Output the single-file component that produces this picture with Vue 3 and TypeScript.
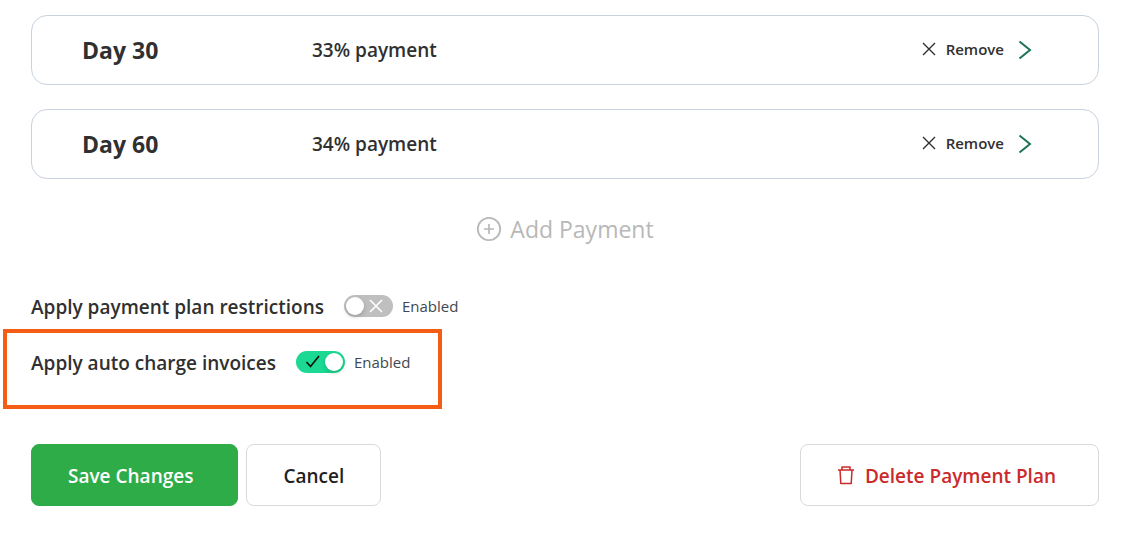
<script setup lang="ts">
import { ref } from 'vue'

interface Installment {
  day: number
  percent: number
}

interface Setting {
  id: string
  label: string
  on: boolean
  highlighted: boolean
}

const installments = ref<Installment[]>([
  { day: 30, percent: 33 },
  { day: 60, percent: 34 },
])

const settings = ref<Setting[]>([
  { id: 'restrictions', label: 'Apply payment plan restrictions', on: false, highlighted: false },
  { id: 'auto-charge', label: 'Apply auto charge invoices', on: true, highlighted: true },
])

function removeInstallment(index: number): void {
  installments.value.splice(index, 1)
}

function addInstallment(): void {
  const last = installments.value[installments.value.length - 1]
  installments.value.push({ day: (last?.day ?? 0) + 30, percent: 0 })
}
</script>

<template>
  <main class="plan">
    <ul class="installments">
      <li v-for="(item, index) in installments" :key="item.day" class="card">
        <strong class="day">Day {{ item.day }}</strong>
        <span class="percent">{{ item.percent }}% payment</span>
        <div class="card-actions">
          <button type="button" class="remove" @click="removeInstallment(index)">
            <svg width="14" height="14" viewBox="0 0 14 14" aria-hidden="true">
              <path d="M1 1 13 13M13 1 1 13" fill="none" stroke="currentColor" stroke-width="1.4" />
            </svg>
            Remove
          </button>
          <button type="button" class="open" :aria-label="`Open day ${item.day}`">
            <svg width="14" height="20" viewBox="0 0 14 20" aria-hidden="true">
              <path d="M1.5 1.5 12 10 1.5 18.5" fill="none" stroke="currentColor" stroke-width="2" />
            </svg>
          </button>
        </div>
      </li>
    </ul>

    <button type="button" class="add" @click="addInstallment">
      <svg width="26" height="26" viewBox="0 0 26 26" aria-hidden="true">
        <circle cx="13" cy="13" r="11.2" fill="none" stroke="currentColor" stroke-width="1.8" />
        <path d="M13 8v10M8 13h10" fill="none" stroke="currentColor" stroke-width="1.7" />
      </svg>
      Add Payment
    </button>

    <div class="settings">
      <div
        v-for="setting in settings"
        :key="setting.id"
        class="setting"
        :class="{ highlighted: setting.highlighted }"
      >
        <label class="setting-label" :for="setting.id">{{ setting.label }}</label>
        <span class="switch">
          <input :id="setting.id" v-model="setting.on" type="checkbox" role="switch" />
          <svg v-if="setting.on" class="mark mark-on" width="16" height="14" viewBox="0 0 16 14" aria-hidden="true">
            <path d="M1.5 7 5.5 11.5 14 1" fill="none" stroke="currentColor" stroke-width="1.7" />
          </svg>
          <svg v-else class="mark mark-off" width="14" height="14" viewBox="0 0 14 14" aria-hidden="true">
            <path d="M1 1 13 13M13 1 1 13" fill="none" stroke="currentColor" stroke-width="1.6" />
          </svg>
        </span>
        <span class="state">Enabled</span>
      </div>
    </div>

    <footer class="footer">
      <button type="button" class="btn save">Save Changes</button>
      <button type="button" class="btn cancel">Cancel</button>
      <button type="button" class="btn delete">
        <svg width="18" height="20" viewBox="0 0 18 20" aria-hidden="true">
          <path
            d="M1 4h16M5 4V1h8v3M3 4 3.8 17.5h10.4L15 4"
            fill="none"
            stroke="currentColor"
            stroke-width="1.5"
            stroke-linejoin="round"
          />
        </svg>
        Delete Payment Plan
      </button>
    </footer>
  </main>
</template>

<style>
body {
  margin: 0;
  background: #fff;
}
</style>

<style scoped>
.plan {
  box-sizing: border-box;
  display: flex;
  flex-direction: column;
  padding: 15px 40px 31px 31px;
  color: #303030;
  font-family: "Segoe UI", "Open Sans", "Noto Sans", sans-serif;
}

button {
  margin: 0;
  padding: 0;
  border: 0;
  background: none;
  color: inherit;
  font-family: inherit;
  cursor: pointer;
}

svg {
  display: block;
  flex: none;
}

.installments {
  display: flex;
  flex-direction: column;
  gap: 24px;
  margin: 0;
  padding: 0;
  list-style: none;
}

.card {
  display: grid;
  grid-template-columns: 230px 1fr auto;
  align-items: center;
  padding: 18px 66px 18px 50px;
  border: 1px solid #c8d3df;
  border-radius: 16px;
  line-height: 32px;
}

.day {
  font-size: 23px;
  font-weight: 700;
}

.percent {
  font-size: 19px;
  font-weight: 600;
}

.card-actions {
  display: flex;
  align-items: center;
  gap: 14px;
}

.remove {
  display: flex;
  align-items: center;
  gap: 10px;
  padding-bottom: 2px;
  font-size: 15px;
  font-weight: 600;
  line-height: 20px;
}

.open {
  color: #1c7552;
}

.add {
  display: flex;
  align-items: center;
  align-self: center;
  gap: 8px;
  margin-top: 34px;
  color: #b8b8b8;
  font-size: 23px;
  line-height: 32px;
}

.settings {
  display: flex;
  flex-direction: column;
  align-items: flex-start;
  margin-top: 46px;
}

.setting {
  display: flex;
  align-items: center;
  line-height: 30px;
}

.highlighted {
  margin: 8px 0 0 -28px;
  padding: 14px 28px 28px 24px;
  border: 4px solid #f55c14;
}

.setting-label {
  margin-right: 20px;
  padding-top: 2px;
  font-size: 19px;
  font-weight: 600;
  line-height: 28px;
}

.switch {
  position: relative;
  display: flex;
  margin-right: 9px;
}

.switch input {
  display: flex;
  align-items: center;
  appearance: none;
  box-sizing: border-box;
  width: 49px;
  height: 22px;
  margin: 0;
  padding: 2px;
  border-radius: 11px;
  background: #bfbfbf;
  cursor: pointer;
}

.switch input::before {
  width: 18px;
  height: 18px;
  border-radius: 50%;
  background: #fff;
  box-shadow: 0 2px 4px rgba(0, 35, 11, 0.2);
  content: "";
}

.switch input:checked {
  justify-content: flex-end;
  background: #1bd993;
}

.mark {
  position: absolute;
  top: 4px;
  pointer-events: none;
}

.mark-on {
  left: 9px;
  color: #111;
}

.mark-off {
  right: 10px;
  color: #fff;
}

.state {
  color: #414852;
  font-size: 15px;
}

.footer {
  display: flex;
  gap: 8px;
  margin-top: 35px;
}

.btn {
  display: flex;
  align-items: center;
  padding: 16px 36px 14px;
  border: 1px solid #d9d9d9;
  border-radius: 8px;
  font-size: 19px;
  font-weight: 600;
  line-height: 30px;
}

.save {
  padding-right: 44px;
  border-color: #2dac48;
  background: #2dac48;
  color: #fff;
}

.cancel {
  color: #1f1f1f;
}

.delete {
  gap: 10px;
  margin-left: auto;
  padding-right: 42px;
  color: #cb2a2a;
}
</style>
